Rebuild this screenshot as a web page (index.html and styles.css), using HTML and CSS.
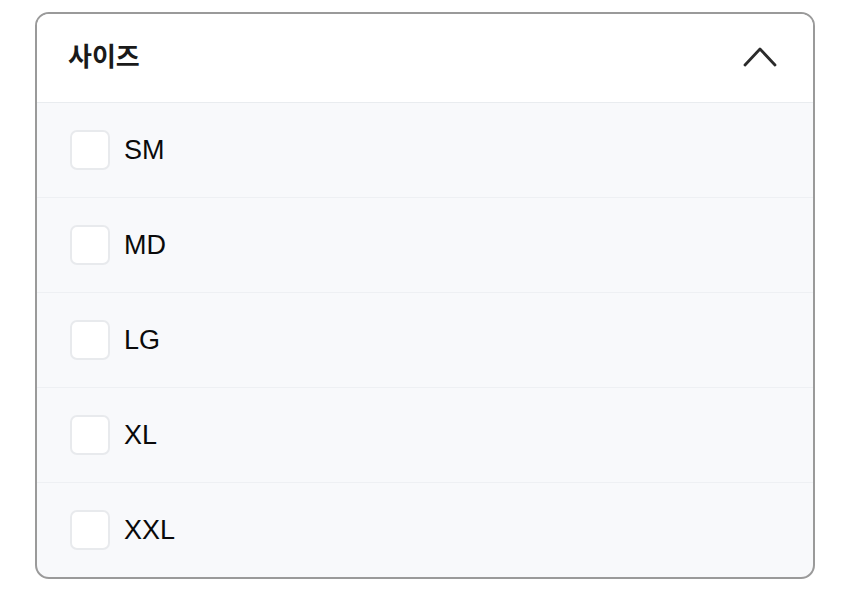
FILE: index.html
```html
<!DOCTYPE html>
<html lang="ko">
<head>
    <meta charset="UTF-8">
    <meta name="viewport" content="width=device-width, initial-scale=1.0">
    <title>사이즈 필터</title>
    <link rel="stylesheet" href="styles.css">
</head>
<body>
    <div class="filter">
        <div class="filter-header">
            <span class="filter-title">사이즈</span>
            <svg class="chevron" width="34" height="22" viewBox="0 0 34 22">
                <path d="M2 19 L17 3 L32 19" fill="none" stroke="#2b2b2b" stroke-width="2.8" stroke-linecap="round" stroke-linejoin="round"/>
            </svg>
        </div>
        <div class="filter-list">
            <label class="option"><span class="box"></span><span class="option-label">SM</span></label>
            <label class="option"><span class="box"></span><span class="option-label">MD</span></label>
            <label class="option"><span class="box"></span><span class="option-label">LG</span></label>
            <label class="option"><span class="box"></span><span class="option-label">XL</span></label>
            <label class="option"><span class="box"></span><span class="option-label">XXL</span></label>
        </div>
    </div>
</body>
</html>
```

FILE: styles.css
```css
body {
    margin: 0;
    padding: 12px 35px;
    background: #fff;
    font-family: "Liberation Sans", "Noto Sans CJK KR", sans-serif;
    color: #111;
}
.filter {
    width: 776px;
    border: 2px solid #9a9a9a;
    border-radius: 14px;
    overflow: hidden;
    background: #f8f9fb;
}
.filter-header {
    height: 88px;
    background: #fff;
    border-bottom: 1px solid #e9ecef;
    display: flex;
    align-items: center;
    justify-content: space-between;
    padding: 0 36px 0 31px;
}
.filter-title {
    font-family: "Noto Sans CJK KR", sans-serif;
    font-size: 26px;
    font-weight: 600;
    color: #1a1a1a;
    margin-top: -7px;
}
.chevron {
    display: block;
    margin-top: -3px;
}
.option {
    height: 94px;
    display: flex;
    align-items: center;
    padding-left: 33px;
    border-bottom: 1px solid #eef0f3;
}
.option:last-child {
    border-bottom: none;
}
.box {
    width: 36px;
    height: 36px;
    border: 2px solid #e8eaed;
    border-radius: 7px;
    background: #fff;
    margin-right: 14px;
}
.option-label {
    font-size: 27px;
    color: #0a0a0a;
}
```
